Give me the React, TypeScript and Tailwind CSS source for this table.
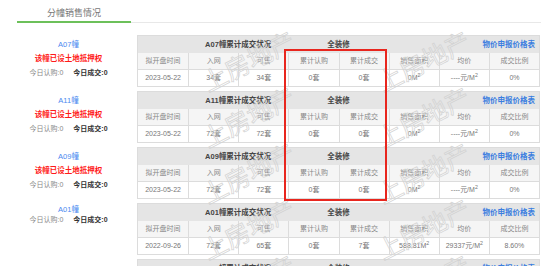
import React from "react";

type Row = {
  name: string;
  mortgage: boolean;
  date: string;
  inNet: string;
  avail: string;
  rg: string;
  cj: string;
  area: string;
  price: string;
  ratio: string;
  hideLeft?: boolean;
};

const rows: Row[] = [
  { name: "A07", mortgage: true, date: "2023-05-22", inNet: "34套", avail: "34套", rg: "0套", cj: "0套", area: "0", price: "----", ratio: "0%" },
  { name: "A11", mortgage: true, date: "2023-05-22", inNet: "72套", avail: "72套", rg: "0套", cj: "0套", area: "0", price: "----", ratio: "0%" },
  { name: "A09", mortgage: true, date: "2023-05-22", inNet: "72套", avail: "72套", rg: "0套", cj: "0套", area: "0", price: "----", ratio: "0%" },
  { name: "A01", mortgage: false, date: "2022-09-26", inNet: "72套", avail: "65套", rg: "0套", cj: "7套", area: "588.81", price: "29337", ratio: "8.60%" },
  { name: "A03", mortgage: false, date: "2022-09-26", inNet: "72套", avail: "72套", rg: "0套", cj: "0套", area: "0", price: "----", ratio: "0%", hideLeft: true },
];

const font = { fontFamily: '"Liberation Sans", "Noto Sans CJK SC", sans-serif' };

function Watermark({ left, top }: { left: number; top: number }) {
  return (
    <span
      className="pointer-events-none absolute z-10 whitespace-nowrap text-[25px] leading-none text-transparent [-webkit-text-stroke:0.7px_#d2d2d2] -rotate-[27deg]"
      style={{ left, top, fontFamily: '"Noto Sans CJK SC", sans-serif' }}
    >
      上房地产
    </span>
  );
}

function Block({ r }: { r: Row }) {
  const cell = "flex items-center justify-center border-l border-[#dcdcdc] first:border-l-0";
  return (
    <div className="relative h-[52px] w-[403px] border border-[#dcdcdc] bg-white">
      <div className="grid h-[17px] grid-cols-8 bg-[#e5e5e5] text-[7.5px] font-bold text-[#444]">
        <div />
        <div className="col-span-2 flex items-center justify-center">{r.name}幢累计成交状况</div>
        <div className="col-span-2 flex items-center justify-center">全装修</div>
        <div className="col-span-3 flex items-center justify-end pr-[4px] text-[#3a7de0]">物价申报价格表</div>
      </div>
      <div className="grid h-[16px] grid-cols-8 bg-[#f5f5f5] text-[7px] text-[#888]">
        <div className={cell}>拟开盘时间</div>
        <div className={cell}>入网</div>
        <div className={cell}>可售</div>
        <div className={cell}>累计认购</div>
        <div className={cell}>累计成交</div>
        <div className={cell}>销售面积</div>
        <div className={cell}>均价</div>
        <div className={cell}>成交比例</div>
      </div>
      <div className="grid h-[17px] grid-cols-8 border-t border-[#dcdcdc] text-[7px] text-[#777]">
        <div className={cell}>{r.date}</div>
        <div className={cell}>{r.inNet}</div>
        <div className={cell}>{r.avail}</div>
        <div className={cell}>{r.rg}</div>
        <div className={cell}>{r.cj}</div>
        <div className={cell}>
          {r.area}M<sup>2</sup>
        </div>
        <div className={cell}>
          {r.price}元/M<sup>2</sup>
        </div>
        <div className={cell}>{r.ratio}</div>
      </div>
      <Watermark left={60} top={12} />
      <Watermark left={235} top={12} />
      <Watermark left={398} top={12} />
    </div>
  );
}

export default function App() {
  return (
    <div className="relative h-[266px] w-[541px] overflow-hidden bg-white" style={font}>
      <div className="flex h-[23px] pl-[17px]">
        <div className="flex w-[114px] flex-col">
          <div className="flex h-[21px] items-end justify-center pb-[3px] text-[9px] leading-[9px] text-[#777]">分幢销售情况</div>
          <div className="h-[2px] bg-[#6cc05a]" />
        </div>
        <div className="flex flex-1 flex-col justify-end">
          <div className="h-px bg-[#e8e8e8]" />
        </div>
      </div>
      <div className="mt-[12px] flex flex-col gap-[4px]">
        {rows.map((r) => (
          <div key={r.name} className="flex">
            <div
              className={
                "flex w-[137px] flex-col items-center text-[7px] " +
                (r.mortgage ? "pt-[3px] leading-[14px]" : "pt-[2px] leading-[10px]") +
                (r.hideLeft ? " invisible" : "")
              }
            >
              <div className="text-[7.5px] text-[#4a8af0]">{r.name}幢</div>
              {r.mortgage && <div className="text-[7.5px] font-bold text-[#ff1a1a]">该幢已设土地抵押权</div>}
              <div className="flex gap-[10px]">
                <span className="text-[#888]">今日认购:0</span>
                <span className="font-bold text-[#333]">今日成交:0</span>
              </div>
            </div>
            <Block r={r} />
          </div>
        ))}
      </div>
      <div className="pointer-events-none absolute left-[284px] top-[49px] z-20 h-[152px] w-[103px] border-2 border-[#e8261e]" />
    </div>
  );
}
